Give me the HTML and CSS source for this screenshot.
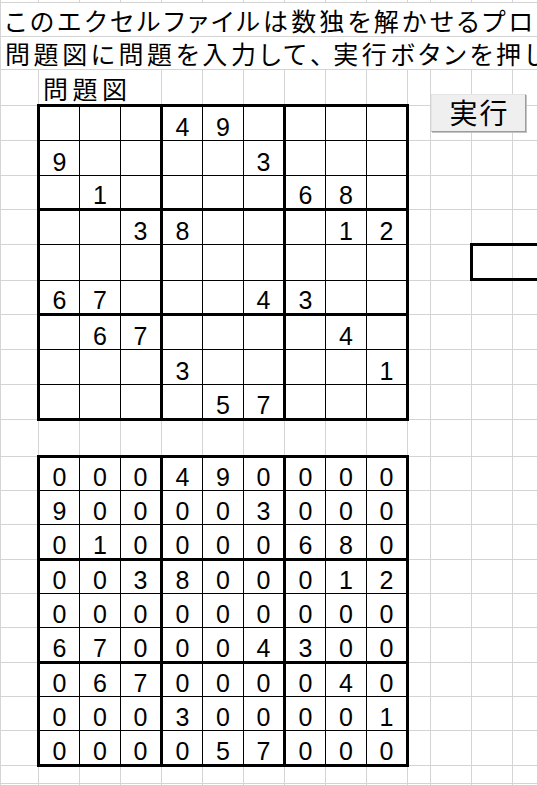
FILE: index.html
```html
<!DOCTYPE html>
<html lang="ja">
<head>
<meta charset="utf-8">
<title>数独</title>
<link rel="stylesheet" href="styles.css">
</head>
<body>
<div class="sheet">
  <div class="line l1">このエクセルファイルは数独を解かせるプロ</div>
  <div class="line l2">問題図に問題を入力して<span class="comma">、</span>実行ボタンを押し</div>
  <div class="line l3">問題図</div>

  <div class="board b1">
    <span></span><span></span><span></span><span>4</span><span>9</span><span></span><span></span><span></span><span></span>
    <span>9</span><span></span><span></span><span></span><span></span><span>3</span><span></span><span></span><span></span>
    <span></span><span>1</span><span></span><span></span><span></span><span></span><span>6</span><span>8</span><span></span>
    <span></span><span></span><span>3</span><span>8</span><span></span><span></span><span></span><span>1</span><span>2</span>
    <span></span><span></span><span></span><span></span><span></span><span></span><span></span><span></span><span></span>
    <span>6</span><span>7</span><span></span><span></span><span></span><span>4</span><span>3</span><span></span><span></span>
    <span></span><span>6</span><span>7</span><span></span><span></span><span></span><span></span><span>4</span><span></span>
    <span></span><span></span><span></span><span>3</span><span></span><span></span><span></span><span></span><span>1</span>
    <span></span><span></span><span></span><span></span><span>5</span><span>7</span><span></span><span></span><span></span>
  </div>

  <div class="board b2">
    <span>0</span><span>0</span><span>0</span><span>4</span><span>9</span><span>0</span><span>0</span><span>0</span><span>0</span>
    <span>9</span><span>0</span><span>0</span><span>0</span><span>0</span><span>3</span><span>0</span><span>0</span><span>0</span>
    <span>0</span><span>1</span><span>0</span><span>0</span><span>0</span><span>0</span><span>6</span><span>8</span><span>0</span>
    <span>0</span><span>0</span><span>3</span><span>8</span><span>0</span><span>0</span><span>0</span><span>1</span><span>2</span>
    <span>0</span><span>0</span><span>0</span><span>0</span><span>0</span><span>0</span><span>0</span><span>0</span><span>0</span>
    <span>6</span><span>7</span><span>0</span><span>0</span><span>0</span><span>4</span><span>3</span><span>0</span><span>0</span>
    <span>0</span><span>6</span><span>7</span><span>0</span><span>0</span><span>0</span><span>0</span><span>4</span><span>0</span>
    <span>0</span><span>0</span><span>0</span><span>3</span><span>0</span><span>0</span><span>0</span><span>0</span><span>1</span>
    <span>0</span><span>0</span><span>0</span><span>0</span><span>5</span><span>7</span><span>0</span><span>0</span><span>0</span>
  </div>

  <button class="run" type="button">実行</button>
  <div class="frame"></div>
</div>
</body>
</html>
```

FILE: styles.css
```css
html, body {
  margin: 0;
  padding: 0;
  background: #fff;
}

.sheet {
  position: relative;
  width: 537px;
  height: 785px;
  overflow: hidden;
  background-color: #fff;
  background-image:
    linear-gradient(to right,
      #d4d4d4 0 1px, transparent 1px 38px,
      #d4d4d4 38px 39px, transparent 39px 79px,
      #d4d4d4 79px 80px, transparent 80px 120px,
      #d4d4d4 120px 121px, transparent 121px 161px,
      #d4d4d4 161px 162px, transparent 162px 202px,
      #d4d4d4 202px 203px, transparent 203px 243px,
      #d4d4d4 243px 244px, transparent 244px 284px,
      #d4d4d4 284px 285px, transparent 285px 325px,
      #d4d4d4 325px 326px, transparent 326px 366px,
      #d4d4d4 366px 367px, transparent 367px 407px,
      #d4d4d4 407px 408px, transparent 408px 430px,
      #d4d4d4 430px 431px, transparent 431px 471px,
      #d4d4d4 471px 472px, transparent 472px 512px,
      #d4d4d4 512px 513px, transparent 513px),
    linear-gradient(to bottom,
      transparent 0 2px, #d4d4d4 2px 3px,
      transparent 3px 36px, #d4d4d4 36px 37px,
      transparent 37px 69px, #d4d4d4 69px 70px,
      transparent 70px 105px, #d4d4d4 105px 106px,
      transparent 106px 140px, #d4d4d4 140px 141px,
      transparent 141px 175px, #d4d4d4 175px 176px,
      transparent 176px 209px, #d4d4d4 209px 210px,
      transparent 210px 244px, #d4d4d4 244px 245px,
      transparent 245px 280px, #d4d4d4 280px 281px,
      transparent 281px 314px, #d4d4d4 314px 315px,
      transparent 315px 349px, #d4d4d4 349px 350px,
      transparent 350px 384px, #d4d4d4 384px 385px,
      transparent 385px 419px, #d4d4d4 419px 420px,
      transparent 420px 456px, #d4d4d4 456px 457px,
      transparent 457px 490px, #d4d4d4 490px 491px,
      transparent 491px 524px, #d4d4d4 524px 525px,
      transparent 525px 559px, #d4d4d4 559px 560px,
      transparent 560px 593px, #d4d4d4 593px 594px,
      transparent 594px 627px, #d4d4d4 627px 628px,
      transparent 628px 662px, #d4d4d4 662px 663px,
      transparent 663px 696px, #d4d4d4 696px 697px,
      transparent 697px 730px, #d4d4d4 730px 731px,
      transparent 731px 765px, #d4d4d4 765px 766px,
      transparent 766px 783px, #d4d4d4 783px 784px,
      transparent 784px);
  font-family: "Noto Sans CJK JP", "Noto Sans", sans-serif;
  color: #000;
}

.line {
  box-sizing: border-box;
  display: flex;
  align-items: flex-end;
  background: #fff;
  white-space: nowrap;
  font-size: 25px;
  line-height: 25px;
  font-feature-settings: "palt";
  padding: 0 0 3px 4px;
}

.l1 {
  margin: 3px 0 0 1px;
  height: 33px;
  letter-spacing: 3.2px;
}

.l2 {
  margin: 1px 0 0 1px;
  height: 32px;
  letter-spacing: 3.6px;
}

.l2 .comma {
  margin-right: 7px;
}

.l3 {
  margin: 1px 0 0 39px;
  width: 122px;
  height: 34px;
  letter-spacing: 4.5px;
}

.board {
  display: grid;
  width: max-content;
  margin-left: 37px;
  padding: 3px;
  gap: 1px;
  background: #000;
  grid-template-columns: 39px 40px 41px 39px 40px 41px 39px 40px 39px;
}

.b1 {
  grid-template-rows: 33px 34px 34px 33px 35px 34px 33px 34px 33px;
}

.b2 {
  margin-top: 34px;
  grid-template-rows: 32px 33px 35px 32px 33px 35px 32px 33px 33px;
}

.board span {
  box-sizing: border-box;
  display: flex;
  align-items: flex-end;
  justify-content: center;
  padding-bottom: 3px;
  background: #fff;
  font-family: "Liberation Sans", Arial, sans-serif;
  font-size: 25px;
  line-height: 20px;
}

.board span:nth-child(9n+3),
.board span:nth-child(9n+6) {
  border-right: 2px solid #000;
}

.board span:nth-child(n+19):nth-child(-n+27),
.board span:nth-child(n+46):nth-child(-n+54) {
  border-bottom: 2px solid #000;
}

.run {
  position: absolute;
  left: 431px;
  top: 94px;
  width: 95px;
  height: 38px;
  box-sizing: border-box;
  margin: 0;
  padding: 0 0 2px 2px;
  background: #efefef;
  border: 1px solid;
  border-color: #e4e4e4 #9c9c9c #9c9c9c #e4e4e4;
  box-shadow: 1px 1px 0 #c4c4c4;
  font-family: "Noto Sans CJK JP", sans-serif;
  font-size: 28px;
  line-height: 30px;
  letter-spacing: 2px;
  color: #000;
}

.frame {
  position: absolute;
  left: 470px;
  top: 243px;
  width: 90px;
  height: 38px;
  box-sizing: border-box;
  border: 3px solid #000;
}
```
